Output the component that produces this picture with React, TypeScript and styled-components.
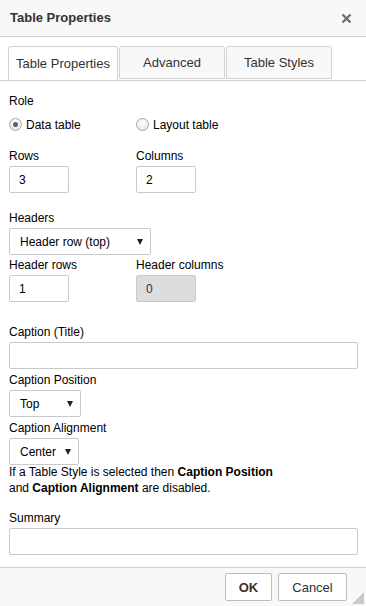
import React, { useState } from "react";
import styled, { createGlobalStyle } from "styled-components";

const GlobalStyle = createGlobalStyle`
  html, body {
    margin: 0;
    padding: 0;
    background: #fff;
  }
  body {
    font-family: "Liberation Sans", Arial, sans-serif;
    font-size: 12px;
    color: #000;
  }
`;

const Dialog = styled.div`
  width: 366px;
  height: 606px;
  display: flex;
  flex-direction: column;
  background: #fff;
  position: relative;
  overflow: hidden;
`;

const Header = styled.div`
  height: 36px;
  flex: none;
  display: flex;
  align-items: center;
  justify-content: space-between;
  padding: 0 10px;
  background: #f8f8f8;
  border-bottom: 1px solid #d1d1d1;
`;

const Title = styled.div`
  font-size: 13px;
  font-weight: bold;
  color: #333;
  margin-top: -2px;
`;

const Close = styled.button`
  width: 16px;
  height: 16px;
  padding: 0;
  border: 0;
  background: transparent;
  display: flex;
  align-items: center;
  justify-content: center;
  margin-right: 2px;
  cursor: pointer;
`;

const Tabs = styled.div`
  display: flex;
  gap: 1px;
  margin-top: 9px;
  padding-left: 8px;
  border-bottom: 1px solid #d1d1d1;
  height: 34px;
  flex: none;
`;

const Tab = styled.div<{ active?: boolean }>`
  width: 106px;
  height: ${p => (p.active ? "34px" : "33px")};
  box-sizing: border-box;
  border: 1px solid #d1d1d1;
  border-bottom: ${p => (p.active ? "0" : "1px solid #d1d1d1")};
  border-radius: 3px 3px 0 0;
  background: ${p => (p.active ? "#fff" : "#f8f8f8")};
  display: flex;
  align-items: center;
  justify-content: center;
  font-size: 13px;
  color: #333;
  margin-bottom: ${p => (p.active ? "-1px" : "0")};
  cursor: pointer;
  &:first-child {
    width: 110px;
  }
`;

const Body = styled.div`
  flex: 1;
  padding: 0 8px 0 9px;
  display: flex;
  flex-direction: column;
`;

const Section = styled.div<{ top: number }>`
  margin-top: ${p => p.top}px;
  display: flex;
  flex-direction: column;
`;

const Label = styled.div`
  line-height: 16px;
  height: 16px;
  margin-bottom: 2px;
  white-space: nowrap;
`;

const Pair = styled.div<{ top: number }>`
  margin-top: ${p => p.top}px;
  display: grid;
  grid-template-columns: 127px 1fr;
`;

const RadioRow = styled.div`
  display: grid;
  grid-template-columns: 127px 1fr;
  margin-top: 6px;
  height: 16px;
`;

const RadioLabel = styled.label`
  display: flex;
  align-items: center;
  gap: 4px;
  line-height: 16px;
  cursor: pointer;
`;

const RadioDot = styled.span<{ checked?: boolean }>`
  width: 13px;
  height: 13px;
  box-sizing: border-box;
  border-radius: 50%;
  border: 1px solid #a6a6a6;
  background: radial-gradient(circle at 50% 35%, #fdfdfd 0%, #e4e4e4 100%);
  display: flex;
  align-items: center;
  justify-content: center;
  margin-top: -1px;
  &::after {
    content: "";
    display: ${p => (p.checked ? "block" : "none")};
    width: 5px;
    height: 5px;
    border-radius: 50%;
    background: #5f5f5f;
  }
`;

const TextBox = styled.input<{ w?: number }>`
  width: ${p => (p.w ? `${p.w}px` : "100%")};
  height: 27px;
  box-sizing: border-box;
  border: 1px solid #c9c9c9;
  border-radius: 2px;
  padding: 0 9px;
  margin: 0;
  font-family: "Liberation Sans", Arial, sans-serif;
  font-size: 12px;
  color: #000;
  background: #fff;
  outline: none;
  &:disabled {
    background: #ddd;
    color: #333;
  }
`;

const Select = styled.div<{ w: number }>`
  width: ${p => p.w}px;
  height: 27px;
  box-sizing: border-box;
  border: 1px solid #c9c9c9;
  border-radius: 2px;
  padding: 0 7px 0 10px;
  display: flex;
  align-items: center;
  justify-content: space-between;
  background: #fff;
  font-size: 12px;
  cursor: pointer;
`;

const Arrow = styled.span`
  width: 0;
  height: 0;
  border-left: 3px solid transparent;
  border-right: 3px solid transparent;
  border-top: 6px solid #222;
  margin-top: 1px;
`;

const Note = styled.div`
  line-height: 16px;
  margin-top: -1px;
  b {
    font-weight: bold;
  }
`;

const Footer = styled.div`
  height: 39px;
  flex: none;
  box-sizing: border-box;
  background: #f8f8f8;
  border-top: 1px solid #d1d1d1;
  display: flex;
  justify-content: flex-end;
  align-items: flex-start;
  gap: 6px;
  padding: 5px 19px 0 0;
`;

const Button = styled.button<{ primary?: boolean }>`
  height: 28px;
  box-sizing: border-box;
  padding: 0;
  width: ${p => (p.primary ? "47px" : "69px")};
  border: 1px solid #bcbcbc;
  border-radius: 2px;
  background: #fff;
  font-family: "Liberation Sans", Arial, sans-serif;
  font-size: 13px;
  font-weight: ${p => (p.primary ? "bold" : "normal")};
  color: #333;
  cursor: pointer;
`;

const Grip = styled.svg`
  position: absolute;
  right: 2px;
  bottom: 2px;
`;

const tabs = ["Table Properties", "Advanced", "Table Styles"];

export default function App() {
  const [tab, setTab] = useState(0);
  const [role, setRole] = useState("data");

  return (
    <>
      <GlobalStyle />
      <Dialog>
        <Header>
          <Title>Table Properties</Title>
          <Close aria-label="Close">
            <svg width="11" height="11" viewBox="0 0 11 11">
              <path d="M1.5 1.5 L9.5 9.5 M9.5 1.5 L1.5 9.5" stroke="#707070" strokeWidth="2.4" />
            </svg>
          </Close>
        </Header>

        <Tabs>
          {tabs.map((t, i) => (
            <Tab key={t} active={i === tab} onClick={() => setTab(i)}>
              {t}
            </Tab>
          ))}
        </Tabs>

        <Body>
          <Section top={12}>
            <Label>Role</Label>
            <RadioRow>
              <RadioLabel onClick={() => setRole("data")}>
                <RadioDot checked={role === "data"} />
                Data table
              </RadioLabel>
              <RadioLabel onClick={() => setRole("layout")}>
                <RadioDot checked={role === "layout"} />
                Layout table
              </RadioLabel>
            </RadioRow>
          </Section>

          <Pair top={15}>
            <Section top={0}>
              <Label>Rows</Label>
              <TextBox w={60} defaultValue="3" />
            </Section>
            <Section top={0}>
              <Label>Columns</Label>
              <TextBox w={60} defaultValue="2" />
            </Section>
          </Pair>

          <Section top={17}>
            <Label>Headers</Label>
            <Select w={142}>
              Header row (top)
              <Arrow />
            </Select>
          </Section>

          <Pair top={2}>
            <Section top={0}>
              <Label>Header rows</Label>
              <TextBox w={60} defaultValue="1" />
            </Section>
            <Section top={0}>
              <Label>Header columns</Label>
              <TextBox w={60} defaultValue="0" disabled />
            </Section>
          </Pair>

          <Section top={22}>
            <Label>Caption (Title)</Label>
            <TextBox />
          </Section>

          <Section top={3}>
            <Label>Caption Position</Label>
            <Select w={72}>
              Top
              <Arrow />
            </Select>
          </Section>

          <Section top={3}>
            <Label>Caption Alignment</Label>
            <Select w={70}>
              Center
              <Arrow />
            </Select>
          </Section>

          <Note>
            If a Table Style is selected then <b>Caption Position</b>
            <br />
            and <b>Caption Alignment</b> are disabled.
          </Note>

          <Section top={14}>
            <Label>Summary</Label>
            <TextBox />
          </Section>
        </Body>

        <Footer>
          <Button primary>OK</Button>
          <Button>Cancel</Button>
        </Footer>

        <Grip width="12" height="12" viewBox="0 0 12 12">
          <path d="M12 0 L12 12 L0 12 Z" fill="#c9c9c9" />
        </Grip>
      </Dialog>
    </>
  );
}
